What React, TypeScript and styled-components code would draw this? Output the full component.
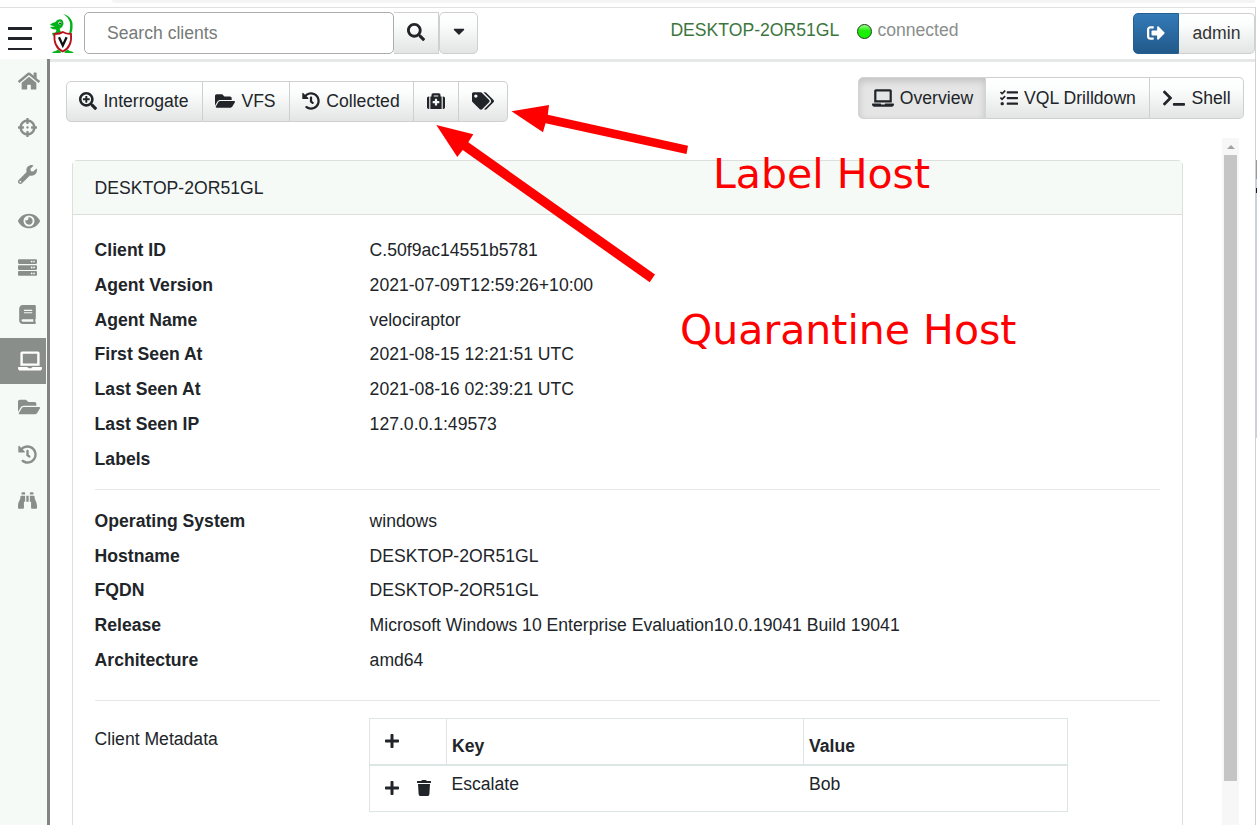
import React from 'react';
import styled, { createGlobalStyle, css } from 'styled-components';
import {
  FaHome, FaCrosshairs, FaWrench, FaEye, FaServer, FaBook, FaLaptop, FaFolderOpen, FaHistory,
  FaBinoculars, FaSearchPlus, FaMedkit, FaTags, FaTasks, FaTerminal, FaSignOutAlt, FaPlus,
  FaTrash, FaSearch, FaCaretDown,
} from 'react-icons/fa';

const Global = createGlobalStyle`
  * { box-sizing: border-box; }
  body {
    margin: 0;
    background: #fff;
    color: #212529;
    font-family: "Liberation Sans", Arial, sans-serif;
    font-size: 17.6px;
    line-height: 26.4px;
    overflow: hidden;
  }
`;

const Page = styled.div`
  position: relative;
  width: 1257px;
  height: 825px;
  display: flex;
  overflow: hidden;
`;

const AppFrame = styled.div`
  width: 1255px;
  display: flex;
  flex-direction: column;
`;

const BrowserEdge = styled.div`
  height: 8px;
  flex: none;
  display: flex;
  border-bottom: 1px solid #dfe1e1;
  &::before {
    content: "";
    margin-left: 112px;
    flex: 1;
    height: 3px;
    background: #f5f5f5;
    border-radius: 0 0 0 8px;
  }
`;

const Header = styled.header`
  height: 54px;
  flex: none;
  display: flex;
  align-items: flex-start;
  border-bottom: 3px solid #e6e8e7;
`;

const MenuButton = styled.div`
  width: 24px;
  height: 23px;
  margin: 19px 0 0 8px;
  display: flex;
  flex-direction: column;
  justify-content: space-between;
`;
const MenuBar = styled.span`
  height: 2.5px;
  background: #212529;
`;

const Logo = styled.svg`
  width: 26px;
  height: 42px;
  margin: 5px 0 0 17px;
`;

const SearchInput = styled.div`
  width: 310px;
  height: 42px;
  margin: 4px 0 0 9px;
  padding: 7px 22px;
  border: 1px solid #a9adab;
  border-radius: 5px;
  color: #767a78;
`;

const Button = styled.div<{ $w: number; $active?: boolean; $primary?: boolean }>`
  width: ${p => p.$w}px;
  height: 42px;
  flex: none;
  display: flex;
  align-items: center;
  justify-content: center;
  gap: 6px;
  white-space: nowrap;
  border: 1px solid #cdd0cf;
  background: linear-gradient(#fff, #fbfdfc 30%, #e3e5e4);
  & + & { border-left-width: 0; }
  ${p => p.$active && css`
    background: #e4e5e4;
    box-shadow: inset 0 3px 7px rgba(0, 0, 0, 0.16);
    border-color: #d3d5d4;
  `}
  ${p => p.$primary && css`
    color: #fff;
    border-color: #245f92;
    background: linear-gradient(#337ab7, #22598a);
  `}
  svg { flex: none; }
`;

const ButtonGroup = styled.div`
  display: flex;
  border-radius: 5px;
  ${Button}:first-child { border-radius: 5px 0 0 5px; }
  ${Button}:last-child { border-radius: 0 5px 5px 0; }
`;

const SearchButtons = styled.div`
  display: flex;
  margin-top: 4px;
  ${Button} { padding-bottom: 2px; }
  ${Button}:last-child { border-radius: 5px; border-left-width: 1px; padding-bottom: 5px; }
  ${Button}:first-child { border-left-width: 0; }
`;

const ClientStatus = styled.div`
  display: flex;
  align-items: center;
  margin: 9px 0 0 192.4px;
  width: 462.6px;
  color: #8a8e8c;
`;
const ClientName = styled.span`
  width: 187px;
  color: #3c763d;
`;
const Lamp = styled.span`
  width: 15px;
  height: 15px;
  margin: 2px 5px 0 0;
  border: 1px solid #1a3a1a;
  border-radius: 50%;
  background: linear-gradient(#9dff8c, #1bec06 45%, #12f400);
`;
const UserGroup = styled(ButtonGroup)`
  margin-top: 5px;
  color: #333;
  ${Button} { height: 41px; padding-bottom: 1px; }
`;

const Body = styled.div`
  flex: 1;
  min-height: 0;
  display: flex;
`;
const Sidebar = styled.nav`
  width: 50px;
  flex: none;
  margin-top: -3px;
  background: #f5faf7;
  border-right: 3px solid #838584;
`;
const NavItem = styled.div<{ $active?: boolean }>`
  width: 46px;
  height: 46.6px;
  padding-left: 18px;
  display: flex;
  align-items: center;
  color: ${p => (p.$active ? '#fff' : '#8a8e8b')};
  background: ${p => (p.$active ? '#8a8e8b' : 'transparent')};
  &:first-child { height: 45.6px; padding-bottom: 1px; }
  svg { flex: none; }
`;

const Main = styled.main`
  flex: 1;
  min-width: 0;
  display: flex;
  flex-direction: column;
`;
const Toolbar = styled.div`
  flex: none;
  display: flex;
  justify-content: space-between;
  padding: 15px 11px 0 16px;
`;
const ClientActions = styled(ButtonGroup)`
  margin-top: 4px;
  ${Button} { height: 41px; padding: 0 1px 1px 0; }
`;
const ViewTabs = styled(ButtonGroup)`
  ${Button} { padding-left: 1px; }
`;

const Scroller = styled.div`
  flex: 1;
  min-height: 0;
  margin-top: 16px;
  display: flex;
  justify-content: space-between;
`;
const Card = styled.section`
  width: 1111px;
  height: 700px;
  margin: 22px 0 0 22px;
  border: 1px solid #dcdfdd;
  border-radius: 5px;
`;
const CardHeader = styled.div`
  height: 54px;
  padding: 14px 21.6px;
  border-bottom: 1px solid #dcdfdd;
  background: #f5faf7;
`;
const Details = styled.dl<{ $last?: boolean }>`
  margin: 0 22px;
  padding: ${p => (p.$last ? '14px 0 22px' : '17.8px 0 12.2px')};
  border-bottom: 1px solid #e6e8e7;
`;
const DetailRow = styled.div`
  display: grid;
  grid-template-columns: 275px 1fr;
  height: 34.8px;
  align-items: center;
  margin-left: -0.4px;
`;
const Term = styled.dt`font-weight: bold;`;
const Value = styled.dd`margin: 0;`;

const Metadata = styled.div`
  display: grid;
  grid-template-columns: 274.4px 699px;
  margin: 17px 22px 0 21.6px;
`;
const MetaLabel = styled.div`padding-top: 8px;`;
const MetaTable = styled.div`border: 1px solid #dde6e4;`;
const MetaRow = styled.div<{ $head?: boolean }>`
  display: grid;
  grid-template-columns: ${p => (p.$head ? '77px 357px 1fr' : '76.5px 357.5px 1fr')};
  height: ${p => (p.$head ? 47 : 45)}px;
  border-bottom: ${p => (p.$head ? '2px solid #dde6e4' : '0')};
  font-weight: ${p => (p.$head ? 'bold' : 'normal')};
`;
const MetaCell = styled.div<{ $head?: boolean }>`
  padding: ${p => (p.$head ? '14px 5px 0' : '5px 5px 0')};
  border-right: ${p => (p.$head ? '1px solid #dde6e4' : '0')};
  &:last-child { border-right: 0; }
`;
const MetaActions = styled(MetaCell)`
  display: flex;
  align-items: center;
  gap: 16px;
  padding: 0 0 0 14px;
`;

const ScrollBar = styled.div`
  width: 17px;
  margin-right: 16px;
  padding: 7px 2px 0;
  background: #f7f7f7;
`;
const ScrollArrow = styled.div`
  width: 0;
  height: 0;
  margin: 0 auto 6px;
  border: 4px solid transparent;
  border-top: 0;
  border-bottom-color: #a3a3a3;
`;
const ScrollThumb = styled.div`
  height: 626px;
  background: #c5c5c5;
`;

const WindowEdge = styled.div`
  width: 2px;
  margin-top: 7px;
  border-left: 1px solid #d0d2d4;
  background: linear-gradient(
    #fff 153px, #999 153px 172px, #c6d0e4 172px 181px, #14182c 181px 186px,
    #c8d0e6 186px 234px, #ccd2d8 234px 431px, #fff 431px
  );
`;

const Annotations = styled.svg`
  position: absolute;
  inset: 0;
  fill: #f00;
  pointer-events: none;
`;
const Note = styled.text`
  font-family: "DejaVu Sans", sans-serif;
  font-size: 41px;
`;

const navIcons = [
  { Icon: FaHome, size: 22 }, { Icon: FaCrosshairs, size: 19 }, { Icon: FaWrench, size: 19 },
  { Icon: FaEye, size: 22 }, { Icon: FaServer, size: 19 }, { Icon: FaBook, size: 19 },
  { Icon: FaLaptop, size: 24 }, { Icon: FaFolderOpen, size: 22 }, { Icon: FaHistory, size: 19 },
  { Icon: FaBinoculars, size: 19 },
];

const identity = [
  ['Client ID', 'C.50f9ac14551b5781'],
  ['Agent Version', '2021-07-09T12:59:26+10:00'],
  ['Agent Name', 'velociraptor'],
  ['First Seen At', '2021-08-15 12:21:51 UTC'],
  ['Last Seen At', '2021-08-16 02:39:21 UTC'],
  ['Last Seen IP', '127.0.0.1:49573'],
  ['Labels', ''],
];
const system = [
  ['Operating System', 'windows'],
  ['Hostname', 'DESKTOP-2OR51GL'],
  ['FQDN', 'DESKTOP-2OR51GL'],
  ['Release', 'Microsoft Windows 10 Enterprise Evaluation10.0.19041 Build 19041'],
  ['Architecture', 'amd64'],
];

const DetailList = ({ rows, last }: { rows: string[][]; last?: boolean }) => (
  <Details $last={last}>
    {rows.map(([term, value]) => (
      <DetailRow key={term}><Term>{term}</Term><Value>{value}</Value></DetailRow>
    ))}
  </Details>
);

const VelociraptorLogo = () => (
  <Logo viewBox="0 0 26 42">
    <path d="M14 1 Q21 2.500 23.300 9 Q24.500 16 21.500 22 L19.500 22 Q22 15 20.800 9 Q19 3.500 14 1Z" fill="#00b318" />
    <path d="M0.800 12 Q3 9.500 6.500 9 Q8 6 11.500 6.300 Q14.500 7 14.500 11 Q14 14 10.500 16 L12 19 L6 21.500 L4 23 L3 20 L6.500 19.500 Q8 18 7 16.500 Q3 17 1 14 L6 13.500Z" fill="#00b318" />
    <path d="M8.500 36.500 L12.500 39 L11 40 L3 40 L4.500 38.500 L7 38Z M19 36.500 L15 39 L16.500 40 L25 40 L23 38.500 L20.500 38Z" fill="#00b318" />
    <circle cx="10.800" cy="10" r="1.500" fill="#fff" />
    <circle cx="11" cy="10.300" r="0.900" fill="#111" />
    <path d="M5.500 21 Q11 21 13.800 19 Q17 21 22 21 Q23.300 34 13.800 38.500 Q4.300 34 5.500 21Z" fill="#fff" stroke="#b8101c" strokeWidth="1.800" />
    <path d="M10 24.300 L13.800 32.500 L17.600 24.300" fill="none" stroke="#111" strokeWidth="2.300" />
  </Logo>
);

export default function App() {
  return (
    <>
      <Global />
      <Page>
        <AppFrame>
          <BrowserEdge />
          <Header>
            <MenuButton><MenuBar /><MenuBar /><MenuBar /></MenuButton>
            <VelociraptorLogo />
            <SearchInput>Search clients</SearchInput>
            <SearchButtons>
              <Button $w={45}><FaSearch size={18} /></Button>
              <Button $w={39}><FaCaretDown size={18} /></Button>
            </SearchButtons>
            <ClientStatus>
              <ClientName>DESKTOP-2OR51GL</ClientName>
              <Lamp />connected
            </ClientStatus>
            <UserGroup>
              <Button $w={46} $primary><FaSignOutAlt size={18} /></Button>
              <Button $w={76}>admin</Button>
            </UserGroup>
          </Header>
          <Body>
            <Sidebar>
              {navIcons.map(({ Icon, size }, i) => (
                <NavItem key={i} $active={i === 6}><Icon size={size} /></NavItem>
              ))}
            </Sidebar>
            <Main>
              <Toolbar>
                <ClientActions>
                  <Button $w={137}><FaSearchPlus size={18} />Interrogate</Button>
                  <Button $w={87}><FaFolderOpen size={20} />VFS</Button>
                  <Button $w={124}><FaHistory size={18} />Collected</Button>
                  <Button $w={45}><FaMedkit size={18} /></Button>
                  <Button $w={49}><FaTags size={22} /></Button>
                </ClientActions>
                <ViewTabs>
                  <Button $w={128} $active><FaLaptop size={22} />Overview</Button>
                  <Button $w={164}><FaTasks size={18} />VQL Drilldown</Button>
                  <Button $w={94}><FaTerminal size={22} />Shell</Button>
                </ViewTabs>
              </Toolbar>
              <Scroller>
                <Card>
                  <CardHeader>DESKTOP-2OR51GL</CardHeader>
                  <DetailList rows={identity} />
                  <DetailList rows={system} last />
                  <Metadata>
                    <MetaLabel>Client Metadata</MetaLabel>
                    <MetaTable>
                      <MetaRow $head>
                        <MetaActions $head><FaPlus size={16} /></MetaActions>
                        <MetaCell $head>Key</MetaCell>
                        <MetaCell $head>Value</MetaCell>
                      </MetaRow>
                      <MetaRow>
                        <MetaActions><FaPlus size={16} /><FaTrash size={16} /></MetaActions>
                        <MetaCell>Escalate</MetaCell>
                        <MetaCell>Bob</MetaCell>
                      </MetaRow>
                    </MetaTable>
                  </Metadata>
                </Card>
                <ScrollBar><ScrollArrow /><ScrollThumb /></ScrollBar>
              </Scroller>
            </Main>
          </Body>
        </AppFrame>
        <WindowEdge />
        <Annotations width="1257" height="825">
          <path d="M511.500 111.300 L549 105 L547.800 114.800 L688 145.800 L686.500 154 L545.500 123.300 L543 132.300Z" />
          <path d="M436.300 125 L473.300 134.300 L468.300 142.300 L655 274.500 L649.700 282.300 L462.700 150 L457.300 157Z" />
          <Note x="713" y="188">Label Host</Note>
          <Note x="680" y="344">Quarantine Host</Note>
        </Annotations>
      </Page>
    </>
  );
}
